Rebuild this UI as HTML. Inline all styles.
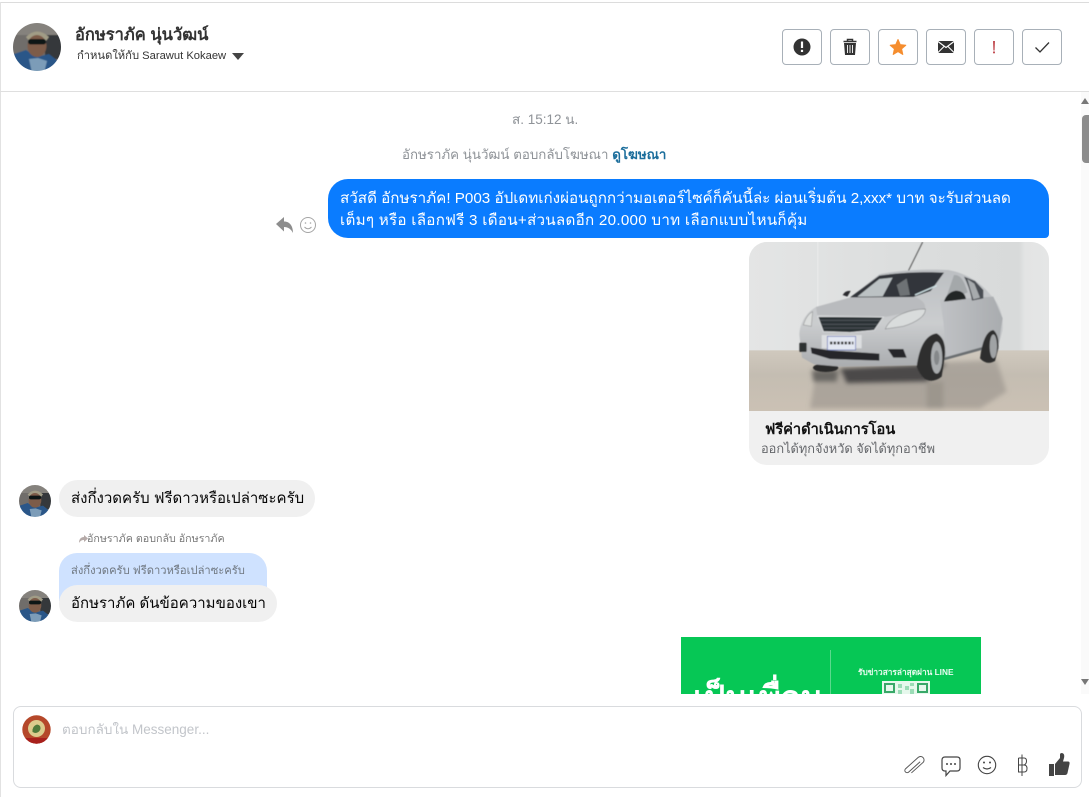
<!DOCTYPE html>
<html lang="th"><head><meta charset="utf-8"><title>Messenger</title>
<style>
html,body{margin:0;padding:0;background:#fff}
body{width:1089px;height:797px;position:relative;overflow:hidden;font-family:"Liberation Sans","Noto Sans CJK SC",sans-serif;color:#000}
.a{position:absolute;white-space:nowrap}
.btn{position:absolute;top:29px;width:38px;height:34px;border:1px solid #a8b0b8;border-radius:4px;background:#fff}
.btn svg{position:absolute;left:0;top:0;width:38px;height:34px}
</style></head><body>
<svg width="0" height="0" style="position:absolute"><defs>
<filter id="bl" x="-10%" y="-10%" width="120%" height="120%"><feGaussianBlur stdDeviation=".5"/></filter>
<filter id="cb" x="-5%" y="-5%" width="110%" height="110%"><feGaussianBlur stdDeviation="1.300"/></filter>
<filter id="fb" x="-10%" y="-10%" width="120%" height="120%"><feGaussianBlur stdDeviation="7"/></filter>
<clipPath id="c1"><circle cx="24" cy="24" r="24"/></clipPath>
<symbol id="av" viewBox="0 0 48 48"><g clip-path="url(#c1)"><g filter="url(#bl)"><rect x="-2" y="-2" width="52" height="52" fill="#6f6d6a"/><rect x="32" y="12" width="18" height="24" fill="#34373a"/><rect x="-2" y="-2" width="52" height="14" fill="#85827d"/><path d="M-2 50V32L13 27 24 34 36 31 50 42V50Z" fill="#2a5688"/><path d="M13 14Q24 3 36 14L33 18H16Z" fill="#a19c86"/><ellipse cx="24" cy="23" rx="9.500" ry="11" fill="#7d5c49"/><rect x="15" y="16" width="18" height="5.500" rx="2.500" fill="#101418"/><path d="M16 36L25 35 34 38 31 50H19Z" fill="#7b9cb8"/></g></g></symbol>
</defs></svg>
<div class="a" style="left:0;top:2px;width:1089px;height:1px;background:#dcdcdc"></div>
<div class="a" style="left:0;top:2px;width:1px;height:795px;background:#e2e2e2"></div>
<div class="a" style="left:0;top:91px;width:1089px;height:1px;background:#dfdfdf"></div>

<svg class="a" style="left:13px;top:23px" width="48" height="48"><use href="#av"/></svg>
<div class="a" style="left:75px;top:25px;font-size:16.500px;line-height:20px;color:#333;font-weight:700">อักษราภัค นุ่นวัฒน์</div>
<div class="a" style="left:77px;top:49px;font-size:11.200px;line-height:14px;color:#333">กำหนดให้กับ Sarawut Kokaew</div>
<svg class="a" style="left:232px;top:53px" width="12" height="7"><path d="M0 0H12L6 7Z" fill="#444"/></svg>

<div class="btn" style="left:782px"><svg viewBox="0 0 38 34"><circle cx="19" cy="17" r="8.500" fill="#333"/><rect x="17.900" y="11.500" width="2.200" height="6.500" fill="#fff"/><rect x="17.900" y="19.800" width="2.200" height="2.200" fill="#fff"/></svg></div>
<div class="btn" style="left:830px"><svg viewBox="0 0 38 34"><path d="M12.500 11.500H25.500M16.500 11V9.500H21.500V11" fill="none" stroke="#333" stroke-width="1.500"/><path d="M13 13H25L24 25H14Z" fill="#333"/><path d="M16.500 15V23M19 15V23M21.500 15V23" stroke="#fff" stroke-width=".9"/></svg></div>
<div class="btn" style="left:878px"><svg viewBox="0 0 38 34"><path d="M19 9.500L21.200 14.600 26.800 15.200 22.600 18.900 23.800 24.500 19 21.600 14.200 24.500 15.400 18.900 11.200 15.200 16.800 14.600Z" fill="#f58d2e" stroke="#f58d2e" stroke-linejoin="round"/></svg></div>
<div class="btn" style="left:926px"><svg viewBox="0 0 38 34"><rect x="11" y="11" width="16" height="12" rx="1" fill="#333"/><path d="M11 11.500L19 17.500 27 11.500M11 22.500L17 16.500M27 22.500L21 16.500" fill="none" stroke="#fff" stroke-width="1.100"/></svg></div>
<div class="btn" style="left:974px"><svg viewBox="0 0 38 34"><path d="M18.200 11H19.800L19.500 20.500H18.500Z" fill="#b4232a"/><rect x="18.200" y="21.500" width="1.600" height="1.800" fill="#b4232a"/></svg></div>
<div class="btn" style="left:1022px"><svg viewBox="0 0 38 34"><path d="M12.500 17.500L17 22 26 12.500" fill="none" stroke="#333" stroke-width="1.300"/></svg></div>

<div class="a" style="left:512px;top:111px;font-size:13.500px;line-height:17px;color:#8f9398">ส. 15:12 น.</div>
<div class="a" style="left:402px;top:146px;font-size:13.300px;line-height:17px;color:#8f9398">อักษราภัค นุ่นวัฒน์ ตอบกลับโฆษณา <span style="color:#1c6e9c;font-weight:700">ดูโฆษณา</span></div>

<svg class="a" style="left:275px;top:215px" width="42" height="20" viewBox="0 0 42 20"><path d="M1 9L9 2V6.500C14 6.500 18 10 18 18 16 14 13 12 9 12V16.500Z" fill="#8d8d8d"/><circle cx="33" cy="10" r="7.500" fill="none" stroke="#a5a5a5"/><circle cx="30.500" cy="8" r=".8" fill="#a5a5a5"/><circle cx="35.500" cy="8" r=".8" fill="#a5a5a5"/><path d="M29.500 12Q33 15.500 36.500 12" fill="none" stroke="#a5a5a5"/></svg>

<div class="a" style="left:328px;top:179px;width:721px;height:59px;background:#0a7cff;border-radius:20px 20px 4px 20px"></div>
<div class="a" style="left:340px;top:188px;font-size:15.200px;line-height:22px;color:#fff">สวัสดี อักษราภัค! P003 อัปเดทเก่งผ่อนถูกกว่ามอเตอร์ไซค์ก็คันนี้ล่ะ ผ่อนเริ่มต้น 2,xxx* บาท จะรับส่วนลด</div>
<div class="a" style="left:340px;top:210px;font-size:15.200px;line-height:22px;color:#fff;letter-spacing:.26px">เต็มๆ หรือ เลือกฟรี 3 เดือน+ส่วนลดอีก 20.000 บาท เลือกแบบไหนก็คุ้ม</div>

<div class="a" style="left:749px;top:242px;width:300px;height:223px;background:#f0f0f0;border-radius:18px;overflow:hidden">
<svg width="300" height="169" viewBox="27 21 900 507" style="display:block"><defs>
<linearGradient id="w" x1="0" y1="0" x2="1" y2="0"><stop offset="0" stop-color="#e4e5e5"/><stop offset=".5" stop-color="#dcdede"/><stop offset=".9" stop-color="#d8dada"/><stop offset=".92" stop-color="#e3e4e4"/><stop offset="1" stop-color="#e5e6e6"/></linearGradient>
<linearGradient id="f" x1="0" y1="0" x2="0" y2="1"><stop offset="0" stop-color="#d0c9be"/><stop offset=".4" stop-color="#c4bdb2"/><stop offset="1" stop-color="#cbc1b4"/></linearGradient>
<linearGradient id="b" x1="0" y1="0" x2="0" y2="1"><stop offset="0" stop-color="#bcbfc2"/><stop offset=".55" stop-color="#cbcdcf"/><stop offset="1" stop-color="#aaacaf"/></linearGradient>
<linearGradient id="side" x1="0" y1="0" x2="1" y2="0"><stop offset="0" stop-color="#c0c2c5"/><stop offset="1" stop-color="#a9acaf"/></linearGradient></defs>
<rect x="27" y="21" width="900" height="507" fill="url(#w)"/>
<rect x="232" y="21" width="3" height="325" fill="#eaebeb"/>
<rect x="27" y="346" width="900" height="182" fill="url(#f)"/>
<g filter="url(#fb)"><path d="M230 400L770 375 800 470 720 520H210Z" fill="#8f8a83" opacity=".5"/><path d="M300 400L620 385 560 440 320 445Z" fill="#4b4a48"/><path d="M215 405L295 405 290 440 220 440Z" fill="#6a6864"/><rect x="560" y="440" width="50" height="80" fill="#9c968d"/></g>
<g filter="url(#cb)">
<path d="M505 108L548 21" stroke="#555" stroke-width="3"/>
<ellipse cx="257" cy="398" rx="38" ry="13" fill="#2b2b2b"/>
<path d="M178 298C180 262 200 232 228 216L330 188 418 118C480 104 570 102 625 105 680 115 725 145 752 180 780 208 792 245 788 285L775 332 620 368 590 390 300 395 222 388 186 368Z" fill="url(#b)"/>
<path d="M600 195L760 185 788 250 775 332 620 368 610 260Z" fill="url(#side)"/>
<path d="M228 216L330 188 525 186C550 195 558 210 555 222L440 245 232 240Z" fill="#b9bbbe"/>
<path d="M330 187L418 122C480 112 560 110 612 113L572 168 520 186Z" fill="#33363a"/>
<path d="M352 185L418 132 458 128 428 184Z" fill="#bcc2c4"/><path d="M470 150L500 130 510 180 480 183Z" fill="#6e7275"/><path d="M525 180L590 152" stroke="#cfe2e5" stroke-width="4"/>
<path d="M616 195L642 120C660 118 672 135 683 172L640 190Z" fill="#a4a8aa"/>
<path d="M672 125L705 138 730 165V190L696 197C690 165 682 145 672 125Z" fill="#4a4e52"/><path d="M682 132L703 146 720 188 700 193Z" fill="#a7abad"/>
<path d="M612 200Q620 172 648 167 674 168 678 192L640 197Z" fill="#232527"/>
<path d="M308 180Q316 166 332 168L322 185Z" fill="#2a2c2e"/>
<path d="M233 244L430 246 403 286 330 293 250 290Z" fill="#2c3034" stroke="#d9dbdd" stroke-width="3"/>
<path d="M240 256H420M245 268H412M250 279H405" stroke="#565b5f" stroke-width="2.500"/>
<path d="M436 282C452 242 510 222 556 222 558 242 530 262 490 274Z" fill="#d9dcdc" stroke="#8b8d8f" stroke-width="2"/>
<path d="M190 270Q200 238 218 230L214 274Z" fill="#dcdedd" stroke="#9a9b9c" stroke-width="2"/>
<rect x="245" y="300" width="120" height="40" fill="#dcdee0"/><rect x="262" y="304" width="85" height="41" fill="#e4e8f2" stroke="#5566b0" stroke-width="2"/>
<path d="M270 324H340" stroke="#333" stroke-width="8" stroke-dasharray="7 4"/>
<path d="M212 337L268 346 418 356V377L270 372 215 355Z" fill="#25272a"/>
<path d="M443 342H490L500 368H460Z" fill="#25272a"/>
<rect x="178" y="323" width="22" height="28" rx="3" fill="#2e3032"/>
<path d="M612 372L735 338" stroke="#6b6e71" stroke-width="8"/>
<path d="M530 395Q542 302 590 295 618 310 615 360L605 425Q580 445 555 432 540 420 530 395Z" fill="#2d2e2f"/>
<ellipse cx="590" cy="368" rx="17" ry="48" fill="#a9acae"/><ellipse cx="590" cy="368" rx="8" ry="22" fill="#85888a"/>
<path d="M720 370Q730 290 760 285 778 300 775 340L765 378Q740 392 720 370Z" fill="#2d2e2f"/>
<ellipse cx="760" cy="334" rx="11" ry="36" fill="#a0a3a5"/>
</g>
</svg>
<div class="a" style="left:16px;top:178px;font-size:14.600px;line-height:20px;font-weight:700;color:#111">ฟรีค่าดำเนินการโอน</div>
<div class="a" style="left:12px;top:198px;font-size:12.800px;line-height:17px;color:#65676b">ออกได้ทุกจังหวัด จัดได้ทุกอาชีพ</div>
</div>

<svg class="a" style="left:19px;top:485px" width="32" height="32"><use href="#av"/></svg>
<div class="a" style="left:59px;top:480px;width:256px;height:37px;background:#f0f0f0;border-radius:19px"></div>
<div class="a" style="left:71px;top:489px;font-size:15px;line-height:20px;color:#050505">ส่งกึ่งวดครับ ฟรีดาวหรือเปล่าซะครับ</div>

<svg class="a" style="left:79px;top:535px" width="9" height="8" viewBox="0 0 9 8"><path d="M9 3.500L5 0V2C2 2 0 4 0 8 1.500 5.500 3 5 5 5V7Z" fill="#b5aaa8"/></svg>
<div class="a" style="left:87px;top:532px;font-size:10.700px;line-height:14px;color:#777">อักษราภัค ตอบกลับ อักษราภัค</div>
<div class="a" style="left:59px;top:553px;width:208px;height:48px;background:#cfe2ff;border-radius:18px 18px 0 0"></div>
<div class="a" style="left:71px;top:563px;font-size:11.200px;line-height:16px;color:#6f7780">ส่งกึ่งวดครับ ฟรีดาวหรือเปล่าซะครับ</div>
<svg class="a" style="left:19px;top:590px" width="32" height="32"><use href="#av"/></svg>
<div class="a" style="left:59px;top:585px;width:218px;height:37px;background:#f0f0f0;border-radius:19px"></div>
<div class="a" style="left:71px;top:594px;font-size:15px;line-height:20px;color:#050505">อักษราภัค ดันข้อความของเขา</div>

<div class="a" style="left:681px;top:637px;width:300px;height:57px;background:#06c755;overflow:hidden">
<div class="a" style="left:12px;top:41px;font-size:33px;line-height:40px;font-weight:700;color:#fff">เป็นเพื่อน</div>
<div class="a" style="left:149px;top:13px;width:1px;height:44px;background:#5bd98d"></div>
<div class="a" style="left:177px;top:29px;font-size:8.300px;line-height:12px;font-weight:700;color:#e9fbf0">รับข่าวสารล่าสุดผ่าน LINE</div>
<div class="a" style="left:201px;top:44px;width:48px;height:13px;background:#e6f8ec"></div>
<svg class="a" style="left:201px;top:44px" width="48" height="13" viewBox="0 0 48 13"><rect x="3" y="3" width="9" height="8" fill="none" stroke="#38a868" stroke-width="2"/><rect x="36" y="3" width="9" height="8" fill="none" stroke="#38a868" stroke-width="2"/><path d="M16 3H20V7H16ZM23 5H27V9H23ZM16 9H20V13H16ZM28 2H32V5H28ZM28 8H32V13H28Z" fill="#9bdcb6"/></svg>
</div>

<div class="a" style="left:1081px;top:92px;width:8px;height:602px;background:#fafafa"></div>
<div class="a" style="left:1082px;top:115px;width:7px;height:48px;background:#8c8c8c;border-radius:4px 0 0 4px"></div>
<svg class="a" style="left:1081px;top:98px" width="8" height="6"><path d="M4 0L8 6H0Z" fill="#777"/></svg>
<svg class="a" style="left:1081px;top:679px" width="8" height="6"><path d="M0 0H8L4 6Z" fill="#777"/></svg>

<div class="a" style="left:13px;top:706px;width:1067px;height:80px;border:1px solid #d9dbde;border-radius:8px;background:#fff"></div>
<svg class="a" style="left:22px;top:715px" width="29" height="29" viewBox="0 0 29 29"><defs><clipPath id="lg"><circle cx="14.500" cy="14.500" r="14.200"/></clipPath></defs><g clip-path="url(#lg)"><rect width="29" height="29" fill="#b5482a"/><rect y="23" width="29" height="6" fill="#a8201c"/><circle cx="14.500" cy="13.500" r="8.500" fill="#dccb8c"/><path d="M10.500 17Q10 11 15 9.500 19 10 18.500 14 17 18 13 18Z" fill="#4f7a3a"/></g></svg>
<div class="a" style="left:62px;top:721px;font-size:13.500px;line-height:18px;color:#c2c5ca">ตอบกลับใน Messenger...</div>

<svg class="a" style="left:900px;top:750px" width="175" height="30" viewBox="0 0 175 30">
<g transform="translate(15 15) rotate(-42)" fill="none" stroke="#555" stroke-width=".95"><path d="M-8 3.500H7.500A3.500 3.500 0 0 0 7.500 -3.500H-9.500A2.200 2.200 0 0 0 -9.500 1H6"/></g>
<path d="M45 7H57Q60 7 60 10V18Q60 21 57 21H50L46 25.500V21H45Q42 21 42 18V10Q42 7 45 7Z" fill="none" stroke="#444" stroke-width="1.200"/>
<circle cx="47" cy="14" r="1" fill="#444"/><circle cx="51" cy="14" r="1" fill="#444"/><circle cx="55" cy="14" r="1" fill="#444"/>
<circle cx="87" cy="15" r="8.700" fill="none" stroke="#444" stroke-width="1.100"/><circle cx="84" cy="12.500" r="1" fill="#444"/><circle cx="90" cy="12.500" r="1" fill="#444"/><path d="M83 17.500Q87 20.500 91 17.500" fill="none" stroke="#444" stroke-width="1.100"/>
<path d="M122 4.500V26M118.500 8H124Q126.500 8 126.500 11T124 15H118.500M118.500 15H124Q127 15 127 18.500T124 22H118.500V8" fill="none" stroke="#444" stroke-width="1"/>
<path d="M149 14H154V26H149Z" fill="#444"/><path d="M155 14L160 8V4.500Q160 3 162 3 165 3.500 164 8L163 11.500H168Q170 11.500 169.500 14L167.500 23Q167 25 165 25H155Z" fill="#444"/>
</svg>
</body></html>
